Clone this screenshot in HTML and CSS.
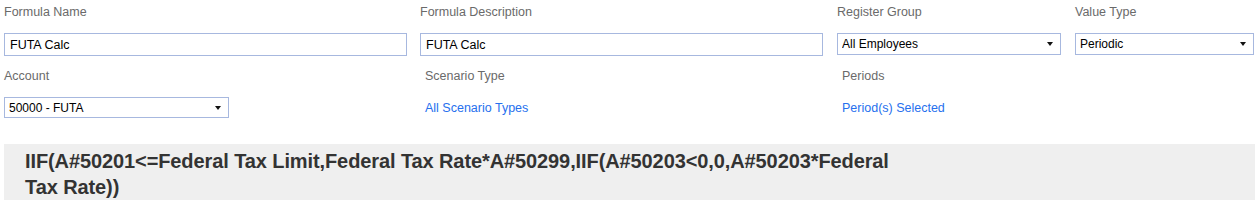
FILE: index.html
```html
<!DOCTYPE html>
<html lang="en">
<head>
    <meta charset="UTF-8">
    <meta name="viewport" content="width=device-width, initial-scale=1.0">
    <title>Formula Editor</title>
    <link rel="stylesheet" href="styles.css">
</head>
<body>
    <!-- Formula properties -->
    <div class="form-grid">
        <div class="field">
            <label for="formulaName">Formula Name</label>
            <input type="text" id="formulaName" class="text-input" value="FUTA Calc">
        </div>
        <div class="field">
            <label for="formulaDesc">Formula Description</label>
            <input type="text" id="formulaDesc" class="text-input" value="FUTA Calc">
        </div>
        <div class="field">
            <label for="registerGroup">Register Group</label>
            <div class="select-wrap select-register">
                <select id="registerGroup">
                    <option>All Employees</option>
                </select>
            </div>
        </div>
        <div class="field">
            <label for="valueType">Value Type</label>
            <div class="select-wrap select-value">
                <select id="valueType">
                    <option>Periodic</option>
                </select>
            </div>
        </div>

        <div class="field">
            <label for="account">Account</label>
            <div class="select-wrap select-account">
                <select id="account">
                    <option>50000 - FUTA</option>
                </select>
            </div>
        </div>
        <div class="field field-link">
            <label>Scenario Type</label>
            <a href="#" class="link">All Scenario Types</a>
        </div>
        <div class="field field-link">
            <label>Periods</label>
            <a href="#" class="link">Period(s) Selected</a>
        </div>
        <div class="field"></div>
    </div>

    <!-- Formula expression -->
    <div class="formula-box">
        <div class="formula-text">IIF(A#50201&lt;=Federal Tax Limit,Federal Tax Rate*A#50299,IIF(A#50203&lt;0,0,A#50203*Federal Tax Rate))</div>
    </div>
</body>
</html>
```

FILE: styles.css
```css
/* Global Styles */
* {
    box-sizing: border-box;
    margin: 0;
    padding: 0;
}
body {
    font-family: "Liberation Sans", Arial, sans-serif;
    font-size: 12.5px;
    background-color: #fff;
    color: #000;
    padding: 0 0 0 4px;
}

/* Form Grid */
.form-grid {
    display: grid;
    grid-template-columns: 416px 417px 238px 1fr;
    row-gap: 8px;
}
.field {
    display: flex;
    flex-direction: column;
    align-items: flex-start;
}
.field label {
    line-height: 24px;
    color: #6a6a6a;
    margin-bottom: 9px;
}
.field-link {
    padding-left: 5px;
}
.field-link label {
    margin-bottom: 8px;
}

/* Inputs */
.text-input {
    width: 403px;
    height: 23px;
    border: 1px solid #a7b8df;
    padding: 0 5px;
    font-family: "Liberation Sans", Arial, sans-serif;
    font-size: 12.5px;
    color: #000;
    outline: none;
}

/* Selects */
.select-wrap {
    position: relative;
    height: 22px;
}
.select-wrap select {
    width: 100%;
    height: 100%;
    border: 1px solid #a7b8df;
    border-radius: 0;
    background: #fff;
    padding: 0 4px;
    font-family: "Liberation Sans", Arial, sans-serif;
    font-size: 12px;
    color: #000;
    appearance: none;
    -webkit-appearance: none;
    outline: none;
}
.select-wrap::after {
    content: "";
    position: absolute;
    right: 8px;
    top: 9px;
    border-left: 3px solid transparent;
    border-right: 3px solid transparent;
    border-top: 4px solid #111;
    pointer-events: none;
}
.select-register {
    width: 224px;
}
.select-value {
    width: 179px;
}
.select-account {
    width: 225px;
    height: 21px;
}

/* Links */
.link {
    color: #2670ee;
    text-decoration: none;
    line-height: 24px;
}

/* Formula Box */
.formula-box {
    margin-top: 24px;
    background-color: #efefef;
    padding: 4px 21px 10px;
    min-height: 60px;
}
.formula-text {
    max-width: 880px;
    font-family: "Liberation Sans", Arial, sans-serif;
    font-weight: bold;
    font-size: 20px;
    letter-spacing: -0.1px;
    line-height: 26px;
    color: #333;
}
```
